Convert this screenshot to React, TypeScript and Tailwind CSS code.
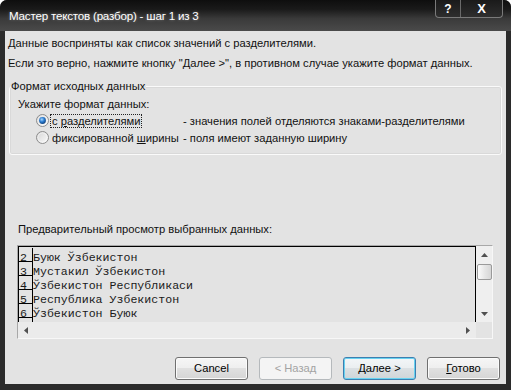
import React from "react";

const Radio = ({ checked }: { checked?: boolean }) => (
  <svg width="13" height="13" viewBox="0 0 13 13" className="shrink-0">
    <defs>
      <linearGradient id={checked ? "rgA" : "rgB"} x1="0" y1="0" x2="1" y2="1">
        <stop offset="0" stopColor="#d4d4d4" />
        <stop offset="1" stopColor="#fbfbfb" />
      </linearGradient>
      <radialGradient id="dot" cx="0.4" cy="0.35" r="0.7">
        <stop offset="0" stopColor="#a6d8ff" />
        <stop offset="0.5" stopColor="#2a7bd0" />
        <stop offset="1" stopColor="#0f3f78" />
      </radialGradient>
    </defs>
    <circle cx="6.5" cy="6.5" r="6" fill={`url(#${checked ? "rgA" : "rgB"})`} stroke="#8c8c8c" strokeWidth="1" />
    <circle cx="6.5" cy="6.5" r="4.6" fill="none" stroke="#ffffff" strokeOpacity="0.6" strokeWidth="0.8" />
    {checked && <circle cx="6.5" cy="6.5" r="3.4" fill="url(#dot)" />}
  </svg>
);

const Tri = ({ dir }: { dir: "up" | "down" | "left" | "right" }) => {
  const pts =
    dir === "up"
      ? "0,4 7,4 3.5,0"
      : dir === "down"
      ? "0,0 7,0 3.5,4"
      : dir === "left"
      ? "4,0 4,7 0,3.5"
      : "0,0 0,7 4,3.5";
  const w = dir === "up" || dir === "down" ? 7 : 4;
  const h = dir === "up" || dir === "down" ? 4 : 7;
  return (
    <svg width={w} height={h} viewBox={`0 0 ${w} ${h}`}>
      <polygon points={pts} fill="#505050" />
    </svg>
  );
};

const rows = [
  ["2", "Буюк Ўзбекистон"],
  ["3", "Мустакил Ўзбекистон"],
  ["4", "Ўзбекистон Республикаси"],
  ["5", "Республика Узбекистон"],
  ["6", "Ўзбекистон Буюк"],
  ["", ""],
];

const btnBase =
  "w-[73px] h-[23px] rounded-[3px] border flex items-center justify-center text-[11.2px] leading-[13px]";
const btnNormal =
  "border-[#707070] text-black bg-[linear-gradient(to_bottom,#f6f6f6_0%,#eeeeee_50%,#e0e0e0_50%,#d5d5d5_100%)] shadow-[inset_0_0_0_1px_#fbfbfb]";

export default function App() {
  return (
    <div
      className="w-[511px] h-[390px] bg-white"
      style={{ fontFamily: '"Liberation Sans", Arial, sans-serif' }}
    >
      <div className="w-[511px] h-[390px] flex flex-col rounded-t-[7px] overflow-hidden bg-[#2b2b2b]">
        {/* Title bar */}
        <div className="h-[31px] flex items-start bg-[linear-gradient(to_bottom,#0e0e0e_0%,#1a1a1a_30%,#3a3a3a_60%,#4a4a4a_100%)]">
          <span className="mt-[9px] ml-[9px] text-white text-[11.6px] leading-[14px] tracking-[-0.2px] [text-shadow:0_0_3px_rgba(255,255,255,0.35)]">
            Мастер текстов (разбор) - шаг 1 из 3
          </span>
          <div className="ml-auto mr-[8px] flex h-[18px] border border-t-0 border-[#7a7a7a] rounded-b-[4px] overflow-hidden bg-[linear-gradient(to_bottom,#1a1a1a,#2e2e2e)]">
            <div className="w-[24px] flex items-center justify-center text-white font-bold text-[12px] leading-none">
              ?
            </div>
            <div className="w-[42px] border-l border-[#6a6a6a] flex items-center justify-center text-white font-bold text-[13px] leading-none">
              X
            </div>
          </div>
        </div>

        {/* Client area */}
        <div className="h-[353px] mx-[5px] bg-[#e3e3e3] flex flex-col text-[11.2px] leading-[14px] text-[#111]">
          <div className="pt-[5px] pl-[3px]">
            Данные восприняты как список значений с разделителями.
          </div>
          <div className="mt-[6px] pl-[3px]">
            Если это верно, нажмите кнопку "Далее &gt;", в противном случае укажите формат данных.
          </div>

          {/* Group box */}
          <div className="relative mt-[16px] ml-[4px] mr-[4px] h-[69px] border border-[#fafafa] rounded-[3px] shadow-[inset_0_0_0_1px_#d9d9d9]">
            <span className="absolute -top-[8px] left-[1px] bg-[#e3e3e3] pr-[1px] leading-[14px]">
              Формат исходных данных
            </span>
            <div className="pt-[10px] pl-[8px]">Укажите формат данных:</div>
            <div className="flex items-center h-[17px] mt-[1px] pl-[26px]">
              <Radio checked />
              <div className="w-[134px] shrink-0 pl-[1px]">
                <span className="border border-dotted border-[#222] px-[1px] leading-[12px] inline-block">
                  с <span className="underline">р</span>азделителями
                </span>
              </div>
              <span>- значения полей отделяются знаками-разделителями</span>
            </div>
            <div className="flex items-center h-[17px] pl-[26px]">
              <Radio />
              <div className="w-[134px] shrink-0 pl-[1px]">
                <span className="border border-transparent px-[1px] leading-[12px] inline-block">
                  фиксированной <span className="underline">ш</span>ирины
                </span>
              </div>
              <span>- поля имеют заданную ширину</span>
            </div>
          </div>

          <div className="mt-[67px] pl-[13px]">Предварительный просмотр выбранных данных:</div>

          {/* Preview */}
          <div className="mt-[9px] ml-[12px] w-[476px] h-[94px] border border-t-[#a8a8a8] border-l-[#a8a8a8] border-r-[#f7f7f7] border-b-[#f7f7f7] flex flex-col">
            <div className="flex h-[76px]">
              <div
                className="w-[458px] h-[76px] border-t border-l border-r border-black overflow-hidden pt-[1px]"
                style={{ fontFamily: '"Liberation Mono", "Courier New", monospace' }}
              >
                {rows.map(([n, t], i) => (
                  <div key={i} className="flex h-[14px] text-[11.6px] text-[#1a1a1a]">
                    <div className="w-[14px] h-[14px] border-r border-b border-black pl-[1px] pt-[3px] leading-[13px] shrink-0">
                      {n}
                    </div>
                    <div className="pt-[3px] leading-[13px] whitespace-pre">{t}</div>
                  </div>
                ))}
              </div>
              <div className="w-[16px] h-[76px] bg-[#efefef] flex flex-col items-center">
                <div className="h-[12px] flex items-end justify-center pb-[1px]">
                  <Tri dir="up" />
                </div>
                <div className="mt-[6px] w-[15px] h-[16px] ml-[1px] rounded-[2px] border border-[#9a9a9a] bg-[linear-gradient(to_right,#fbfbfb,#e6e6e6_50%,#d6d6d6)]" />
                <div className="mt-auto mb-[6px] flex justify-center">
                  <Tri dir="down" />
                </div>
              </div>
            </div>
            <div className="flex h-[16px]">
              <div className="w-[458px] h-[16px] bg-[#ebebeb] flex items-center justify-between px-[6px]">
                <Tri dir="left" />
                <Tri dir="right" />
              </div>
              <div className="w-[16px] h-[16px] bg-[#e3e3e3]" />
            </div>
          </div>

          {/* Buttons */}
          <div className="mt-[18px] flex justify-end gap-[11px] pr-[6px]">
            <div className={`${btnBase} ${btnNormal}`}>Cancel</div>
            <div className={`${btnBase} border-[#b5b9bc] bg-[#f4f4f4] text-[#a3a3a3]`}>&lt; Назад</div>
            <div
              className={`${btnBase} border-[#3c7fb1] text-black bg-[linear-gradient(to_bottom,#f3f6f8_0%,#eaeef0_50%,#dbe0e3_50%,#cfd5d8_100%)] shadow-[inset_0_0_0_1px_#68d2f0]`}
            >
              <span>
                <span className="underline">Д</span>алее &gt;
              </span>
            </div>
            <div className={`${btnBase} ${btnNormal}`}>
              <span>
                <span className="underline">Г</span>отово
              </span>
            </div>
          </div>
        </div>
        <div className="h-[6px]" />
      </div>
    </div>
  );
}
